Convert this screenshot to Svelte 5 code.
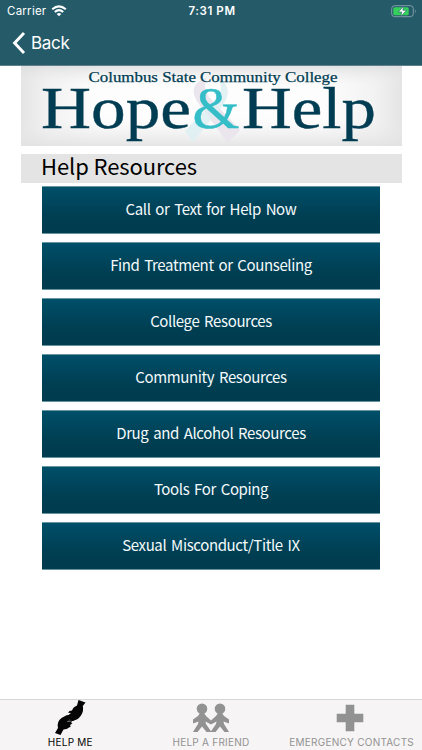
<script lang="ts">
	const resources = [
		'Call or Text for Help Now',
		'Find Treatment or Counseling',
		'College Resources',
		'Community Resources',
		'Drug and Alcohol Resources',
		'Tools For Coping',
		'Sexual Misconduct/Title IX'
	];

	const tabs = [
		{ id: 'me', label: 'HELP ME' },
		{ id: 'friend', label: 'HELP A FRIEND' },
		{ id: 'contacts', label: 'EMERGENCY CONTACTS' }
	];

	let active = $state('me');
</script>

<div class="screen">
	<header>
		<div class="status">
			<div class="carrier">
				<span>Carrier</span>
				<svg width="16" height="12" viewBox="0 0 16 12" fill="none" stroke="#fff" stroke-width="2.1">
					<path d="M1.2 4.3Q8 -1.5 14.8 4.3M3.8 7Q8 3.3 12.2 7" />
					<path d="M8 11.2L5.7 8.9Q8 7.1 10.3 8.9Z" fill="#fff" stroke="none" />
				</svg>
			</div>
			<div class="time">7:31 PM</div>
			<svg class="battery" width="26" height="13" viewBox="0 0 26 13">
				<rect x=".7" y=".7" width="21.6" height="11" rx="3" fill="none" stroke="#819ea8" />
				<path d="M24 4.3Q25.7 6.2 24 8.2Z" fill="#819ea8" />
				<rect x="2.3" y="2.2" width="15.4" height="8" rx="1.5" fill="#35cf5b" />
				<path d="M12.6 1L7.4 7H10.8L9.8 11.4L15.4 5.3H11.8Z" fill="#fff" stroke="#255b69" stroke-width=".6" />
			</svg>
		</div>
		<button class="back">
			<svg width="14" height="22" viewBox="0 0 14 22">
				<path d="M12 1L2.6 11L12 21" fill="none" stroke="#fff" stroke-width="2.9" />
			</svg>
			<span>Back</span>
		</button>
	</header>

	<main>
		<svg class="banner" width="381" height="80" viewBox="0 0 381 80">
			<defs>
				<linearGradient id="side">
					<stop offset="0" stop-color="#e4e4e4" />
					<stop offset=".07" stop-color="#f2f2f2" />
					<stop offset=".2" stop-color="#fdfdfd" />
					<stop offset=".8" stop-color="#fdfdfd" />
					<stop offset=".93" stop-color="#f2f2f2" />
					<stop offset="1" stop-color="#e4e4e4" />
				</linearGradient>
				<linearGradient id="edge" x2="0" y2="1">
					<stop offset="0" stop-color="#dcdddf" stop-opacity=".8" />
					<stop offset=".25" stop-color="#eee" stop-opacity="0" />
					<stop offset=".65" stop-color="#eee" stop-opacity="0" />
					<stop offset="1" stop-color="#e2e2e2" stop-opacity=".9" />
				</linearGradient>
			</defs>
			<rect width="381" height="80" fill="url(#side)" />
			<rect width="381" height="80" fill="url(#edge)" />
			<path d="M186 12C170 17 170 27 178 38L207 77L219 64L188 31Q181 21 186 12Z" fill="#ebe5ed" />
			<path d="M186 12C199 11 204 19 197 31L164 65L172 76L202 39C213 23 204 10 186 12Z" fill="#ddeff1" fill-opacity=".85" />
			<g class="wordmark">
				<text class="college" x="67.5" y="16" textLength="249" lengthAdjust="spacingAndGlyphs">Columbus State Community College</text>
				<text class="word" x="20" y="62" textLength="150" lengthAdjust="spacingAndGlyphs">Hope</text>
				<text class="word amp" x="171.5" y="62" textLength="47" lengthAdjust="spacingAndGlyphs">&amp;</text>
				<text class="word" x="221" y="62" textLength="134" lengthAdjust="spacingAndGlyphs">Help</text>
			</g>
		</svg>

		<h1>Help Resources</h1>

		<nav class="resources">
			{#each resources as resource}
				<button>{resource}</button>
			{/each}
		</nav>
	</main>

	<footer>
		{#each tabs as tab (tab.id)}
			<button class="tab" class:active={active === tab.id} onclick={() => (active = tab.id)}>
				{#if tab.id === 'me'}
					<svg width="34" height="36" viewBox="0 0 34 36" fill="currentColor">
						<path d="M25.5 0L32.5 2.5L29.8 6Q31 11 28 15.5Q25 20 19 21L16 18.5L20.5 15.5L17 17Q15 17 14.6 15.8L18 13L15 12.7Q16 10.5 19 10.5Q20 7 24 5.5Z" />
						<path d="M2 33L5 28Q3.5 21.5 8.5 18L14 15L19 17Q15 19 14 22L18 21.3Q20 21 18 23L19.5 23.5L17 25L17.8 26.5Q14 29.5 10.5 29.5L7.5 35Z" />
						<path d="M14 16L19 14.5L23 17L20.5 21L14 21.5Z" fill-opacity=".85" />
					</svg>
				{:else if tab.id === 'friend'}
					<svg width="38" height="30" viewBox="0 0 38 30" fill="currentColor">
						<circle cx="10" cy="5.7" r="5.3" />
						<circle cx="28" cy="5.7" r="5.3" />
						<path d="M8 10H12L14 13L19 17.5L24 13L26 10H30L32 13L37 16.5V20.5L31.5 18.5L32 21L37 29H32.5L28 23.5L23.5 29H18.5L24 21L24.5 18.5L19 21.5L13.5 18.5L14 21L19.5 29H14.5L10 23.5L5.5 29H1L6 21L6.5 18.5L1 20.5V16.5L6 13Z" />
					</svg>
				{:else}
					<svg class="cross" width="28" height="28" viewBox="0 0 28 28">
						<path d="M9.7 .7H18.3V9.7H27.3V18.3H18.3V27.3H9.7V18.3H.7V9.7H9.7Z" fill="currentColor" />
					</svg>
				{/if}
				<span>{tab.label}</span>
			</button>
		{/each}
	</footer>
</div>

<style>
	:global(body) {
		margin: 0;
		background: #fff;
	}
	.screen {
		height: 750px;
		display: flex;
		flex-direction: column;
		font-family: Inter, sans-serif;
	}
	button {
		border: 0;
		padding: 0;
		background: none;
		font: inherit;
	}
	svg {
		display: block;
	}

	header {
		height: 66px;
		box-sizing: border-box;
		background: #255b69;
		border-bottom: 1px solid #607f8a;
		color: #fff;
	}
	.status {
		height: 22px;
		padding: 0 5px 0 7px;
		display: grid;
		grid-template-columns: 1fr auto 1fr;
		align-items: center;
		font-size: 11.5px;
	}
	.carrier {
		display: flex;
		align-items: center;
		gap: 5px;
		letter-spacing: 0.25px;
	}
	.time {
		font-weight: 600;
		letter-spacing: 0.6px;
	}
	.battery {
		justify-self: end;
	}
	.back {
		display: flex;
		align-items: center;
		gap: 5px;
		height: 42px;
		padding-left: 12px;
		color: #fff;
		font-size: 17px;
		letter-spacing: -0.3px;
	}

	main {
		flex: 1;
	}
	.banner {
		margin-left: 21px;
	}
	.wordmark {
		font-family: 'Liberation Serif', serif;
		fill: #003c52;
	}
	.college {
		font-size: 14.5px;
		stroke: #003c52;
		stroke-width: 0.25;
	}
	.word {
		font-size: 60px;
		stroke: #003c52;
		stroke-width: 0.4;
	}
	.amp {
		fill: #35bec8;
		stroke: #35bec8;
	}
	h1 {
		height: 29px;
		box-sizing: border-box;
		margin: 8px 20px 0 21px;
		padding-left: 20px;
		background: #e4e4e4;
		font: 400 22px/22px 'Noto Sans CJK JP', sans-serif;
		letter-spacing: -0.1px;
		color: #000;
	}
	.resources {
		margin: 3px 42px 0;
		display: flex;
		flex-direction: column;
		gap: 8px;
	}
	.resources button {
		height: 48px;
		box-sizing: border-box;
		padding-bottom: 2px;
		border-top: 1px solid #6695a2;
		border-bottom: 1px solid #6695a2;
		background: linear-gradient(#004f69, #003e52 65%, #003b4e);
		color: #f4fafb;
		font: 15px/20px 'Noto Sans CJK JP', sans-serif;
		letter-spacing: -0.38px;
		word-spacing: 1.8px;
	}

	footer {
		height: 51px;
		box-sizing: border-box;
		border-top: 1px solid #d5d6d7;
		background: #f6f4f5;
		display: grid;
		grid-template-columns: repeat(3, 1fr);
	}
	.tab {
		display: grid;
		grid-template-rows: 36px 12px;
		align-content: start;
		justify-items: center;
		align-items: center;
		color: #929292;
		font-size: 10px;
		line-height: 12px;
		letter-spacing: 0.25px;
		white-space: nowrap;
	}
	.tab.active {
		color: #050505;
	}
	.cross {
		margin-right: 3px;
	}
</style>
